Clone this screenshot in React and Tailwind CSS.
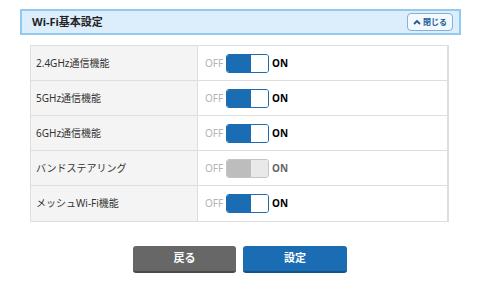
import React, { useState } from 'react';

const rows = [
  { id: 'band24', label: '2.4GHz通信機能', on: true },
  { id: 'band5', label: '5GHz通信機能', on: true },
  { id: 'band6', label: '6GHz通信機能', on: true },
  { id: 'steering', label: 'バンドステアリング', on: true, disabled: true },
  { id: 'mesh', label: 'メッシュWi-Fi機能', on: true },
];

const Toggle = ({ on, disabled, onClick }) => {
  const left = disabled ? 'bg-[#bdbdbd]' : on ? 'bg-[#1b6db3]' : 'bg-white';
  const right = disabled ? 'bg-[#e9e9e9]' : on ? 'bg-white' : 'bg-[#1b6db3]';
  return (
    <div className="flex items-center">
      <span className="text-[10px] text-[#b4b4b4] w-[20px]">OFF</span>
      <button
        onClick={onClick}
        disabled={disabled}
        className={`ml-[1px] flex w-[43px] h-[19px] rounded-[3px] overflow-hidden border ${disabled ? 'border-[#c4c4c4]' : 'border-[#1b6db3]'}`}
      >
        <span className={`w-[24px] h-full ${left}`} />
        <span className={`flex-1 h-full ${right}`} />
      </button>
      <span className={`ml-[3px] text-[10px] font-bold ${disabled ? 'text-[#666]' : 'text-black'}`}>ON</span>
    </div>
  );
};

const App = () => {
  const [state, setState] = useState(
    rows.reduce((acc, r) => ({ ...acc, [r.id]: r.on }), {})
  );

  return (
    <div
      className="w-[480px] h-[283px] bg-white pt-[9px]"
      style={{ fontFamily: '"Noto Sans", "Noto Sans CJK JP", sans-serif' }}
    >
      <div className="ml-[20px] w-[441px] h-[26px] border-2 border-[#92c9f1] bg-[#dcedfc] flex items-center justify-between pl-[10px] pr-[6px]">
        <span className="text-[11px] font-bold text-[#222]">Wi-Fi基本設定</span>
        <button className="w-[46px] h-[18px] rounded-[4px] border border-[#7fb2dd] bg-[#f3f9ff] flex items-center justify-center gap-[2px] text-[8px] font-bold text-[#1b5d99]">
          <svg width="8" height="6" viewBox="0 0 8 6">
            <path d="M1 5 L4 2 L7 5" fill="none" stroke="#1b5d99" strokeWidth="1.8" />
          </svg>
          閉じる
        </button>
      </div>

      <div className="ml-[30px] mt-[10px] w-[419px] border border-[#dedede] border-r-2">
        {rows.map((r, i) => (
          <div key={r.id} className={`flex h-[35px] ${i < rows.length - 1 ? 'border-b border-[#dedede]' : ''}`}>
            <div className="w-[167px] bg-[#f4f4f4] border-r border-[#dedede] flex items-center pl-[5px] text-[10px] text-[#333]">
              {r.label}
            </div>
            <div className="flex-1 flex items-center pl-[7px]">
              <Toggle
                on={state[r.id]}
                disabled={r.disabled}
                onClick={() => setState(prev => ({ ...prev, [r.id]: !prev[r.id] }))}
              />
            </div>
          </div>
        ))}
      </div>

      <div className="mt-[24px] flex justify-center gap-[7px]">
        <button className="w-[103px] h-[27px] rounded-[3px] bg-[#676767] border-b-2 border-[#4a4a4a] text-white text-[11px] font-bold">
          戻る
        </button>
        <button className="w-[104px] h-[27px] rounded-[3px] bg-[#1b6db3] border-b-2 border-[#14538a] text-white text-[11px] font-bold">
          設定
        </button>
      </div>
    </div>
  );
};

export default App;
